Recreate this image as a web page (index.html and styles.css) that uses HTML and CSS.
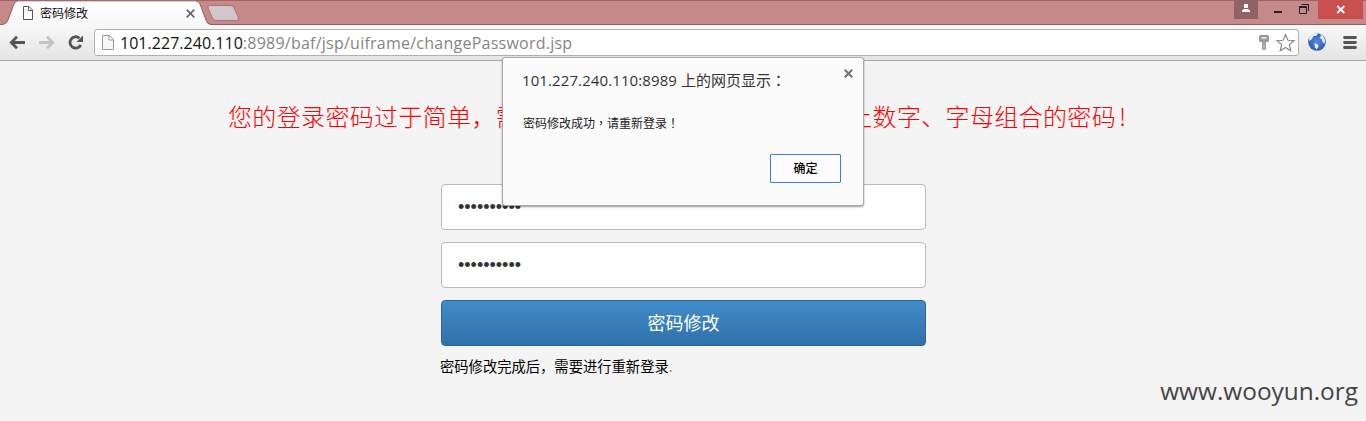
FILE: index.html
```html
<!DOCTYPE html>
<html lang="zh-CN">
<head>
<meta charset="utf-8">
<title>密码修改</title>
<link rel="stylesheet" href="styles.css">
</head>
<body>
<header class="chrome">
  <div class="tabstrip">
    <svg class="tab-shape" width="245" height="26" viewBox="0 0 245 26">
      <defs><linearGradient id="tab" x1="0" y1="0" x2="0" y2="1"><stop offset="0" stop-color="#fff"/><stop offset="1" stop-color="#f7f7f7"/></linearGradient></defs>
      <path d="M0 24.500H2Q6 24.500 7.500 21L14 4Q15.500.8 18 .8H195Q198.500.8 200 4L206 20Q207.500 24.500 211 24.500H245V26H0Z" fill="url(#tab)"/>
      <path d="M0 24.500H2Q6 24.500 7.500 21L14 4Q15.500.8 18 .8H195Q198.500.8 200 4L206 20Q207.500 24.500 211 24.500H245" fill="none" stroke="#955b5d"/>
      <path d="M209.500 5.500H230Q233 5.500 234 8L238.500 18Q239 20.500 236 20.500H216Q213.500 20.500 212.500 18L208 8Q207.500 5.500 209.500 5.500Z" fill="#d3c6cb" stroke="#a77578"/>
    </svg>
    <div class="tab">
      <svg width="10" height="14" viewBox="0 0 10 14" fill="#fff" stroke="#555"><path d="M.5.5H6L9.500 4V13.500H.5ZM5.500.5V4.500H9.500"/></svg>
      <span class="tab-title">密码修改</span>
      <svg width="9" height="9" viewBox="0 0 9 9" stroke="#666" stroke-width="1.700"><path d="M.7.7L8.300 8.300M8.300.7L.7 8.300"/></svg>
    </div>
    <div class="window-buttons">
      <div class="user"><svg width="24" height="19" viewBox="0 0 24 19" fill="#fff"><rect x="10" y="4" width="4" height="4" rx="1"/><path d="M8 12V10.500L10 9H14L16 10.500V12Z"/></svg></div>
      <svg class="win-icons" width="60" height="19" viewBox="0 0 60 19" fill="none" stroke="#222"><path d="M16 12H24" stroke-width="2"/><path d="M41.500 6.500H48.500V13.500H41.500Z" /><path d="M41 7.500H49M43.500 4.500H50.500V11"/></svg>
      <div class="win-close"><svg width="45" height="19" viewBox="0 0 45 19" stroke="#fff" stroke-width="1.800"><path d="M19.300 6L26.300 13M26.300 6L19.300 13"/></svg></div>
    </div>
  </div>
  <div class="toolbar">
    <svg class="nav" width="94" height="36" viewBox="0 0 94 36" fill="none" stroke-width="2.800">
      <path d="M11.500 17.500H25M17 11.800L11.300 17.500L17 23.200" stroke="#555"/>
      <path d="M39 17.500H52.500M47 11.800L52.700 17.500L47 23.200" stroke="#c4c4c4"/>
      <path d="M80.800 20A5.700 5.700 0 1 1 79.500 13.200" stroke="#555"/><path d="M83 10.500V17H76.500Z" fill="#555"/>
    </svg>
    <div class="address">
      <svg class="doc" width="12" height="15" viewBox="0 0 12 15" fill="#f7f7f7" stroke="#999"><path d="M.5.5H7.500L11.500 4.500V14.500H.5ZM7 .5V5H11.500"/></svg>
      <span class="url"><span class="host">101.227.240.110</span>:8989/baf/jsp/uiframe/changePassword.jsp</span>
      <svg class="address-icons" width="40" height="24" viewBox="0 0 40 24">
        <path d="M2 4H10L11 5V10L10 11H8V18L7 19H5L4 18V11H2L1 10V5Z" fill="#999"/><path d="M3.500 7H8.500" stroke="#eee" stroke-width="1.500"/><path d="M6 11V18" stroke="#ccc"/>
        <path d="M27.500 3.500L29.900 9.300L36 9.700L31.300 13.600L32.800 19.700L27.500 16.400L22.200 19.700L23.700 13.600L19 9.700L25.100 9.300Z" fill="#fff" stroke="#888" stroke-width="1.200"/>
      </svg>
    </div>
    <svg class="extras" width="67" height="36" viewBox="0 0 67 36">
      <defs><radialGradient id="globe"><stop offset="0" stop-color="#5a8de0"/><stop offset="1" stop-color="#2f5bb3"/></radialGradient></defs>
      <circle cx="18" cy="17" r="8.800" fill="url(#globe)"/>
      <path d="M10 14Q11 9 17 8L19 9L17 11L14.500 11L13 14L10.500 16ZM21 9L24 11L26 15L25.500 19L23.500 17L23 14.500L20.500 13L22 11ZM15.500 18L19 19.500L19.500 21.500L17.500 24.500L15.800 22Z" fill="#e6effc"/>
      <path d="M45.500 12.500H56.500M45.500 17.500H56.500M45.500 22.500H56.500" stroke="#555" stroke-width="2.800" stroke-linecap="round"/>
    </svg>
  </div>
</header>
<main class="page">
  <h1 class="warning"><span>您的登录密码过于简单，需</span><span>上数字、字母组合的密码<span class="bang">!</span></span></h1>
  <form class="form">
    <div class="field"><span class="dots">••••••••••</span></div>
    <div class="field"><span class="dots">••••••••••</span></div>
    <button class="submit" type="button">密码修改</button>
    <p class="note">密码修改完成后，需要进行重新登录<span class="stop">.</span></p>
  </form>
</main>
<section class="dialog" role="dialog">
  <div class="dialog-head">
    <h2 class="dialog-title"><span class="origin">101.227.240.110:8989</span> 上的网页显示<span class="punct" lang="zh-TW">：</span></h2>
    <svg class="dialog-close" width="9" height="9" viewBox="0 0 9 9" stroke="#777" stroke-width="2.200"><path d="M.8.8L8.200 8.200M8.200.8L.8 8.200"/></svg>
  </div>
  <p class="dialog-text">密码修改成功<span class="punct" lang="zh-TW">，</span>请重新登录<span class="punct" lang="zh-TW">！</span></p>
  <button class="confirm" type="button">确定</button>
</section>
<div class="watermark">www.wooyun.org</div>
</body>
</html>
```

FILE: styles.css
```css
* { box-sizing: border-box; }
body {
  position: relative;
  width: 1366px;
  height: 421px;
  margin: 0;
  overflow: hidden;
  background: #f4f4f4;
  font-family: "Open Sans", "Noto Sans CJK SC", sans-serif;
}
svg { display: block; flex: none; }
.chrome { height: 61px; }
.tabstrip {
  position: relative;
  display: flex;
  justify-content: space-between;
  height: 25px;
  background: #c78a8b;
  border-top: 1px solid #a56567;
  border-bottom: 1px solid #955b5d;
}
.tab-shape { position: absolute; left: 0; top: -1px; z-index: 1; }
.tab {
  position: relative;
  z-index: 2;
  display: flex;
  align-items: center;
  width: 195px;
  height: 24px;
  padding-left: 23px;
}
.tab-title {
  flex: 1;
  margin-left: 7px;
  font-family: "Noto Sans CJK SC", sans-serif;
  font-size: 12px;
  line-height: 18px;
  color: #111;
}
.window-buttons { display: flex; height: 19px; margin: -1px 3px 0 0; }
.user { width: 24px; background: #8f6264; }
.win-icons { width: 60px; }
.win-close { width: 45px; background: #c9504f; }
.toolbar {
  display: flex;
  height: 36px;
  background: linear-gradient(#f8f8f8, #e4e4e4);
  border-bottom: 1px solid #aaa;
}
.address {
  display: flex;
  align-items: center;
  width: 1205px;
  height: 27px;
  margin-top: 4px;
  padding-left: 7px;
  background: #fff;
  border: 1px solid #b0b0b0;
  border-radius: 3px;
}
.url {
  flex: 1;
  margin-left: 6px;
  font-size: 16px;
  line-height: 24px;
  letter-spacing: .24px;
  white-space: nowrap;
  color: #858585;
}
.host { letter-spacing: .03px; color: #111; }
.page { padding-top: 38px; }
.warning {
  display: flex;
  gap: 328px;
  margin: 0 0 0 228px;
  font-family: "Noto Sans CJK SC", sans-serif;
  font-size: 24px;
  font-weight: 300;
  line-height: 34px;
  letter-spacing: .35px;
  white-space: nowrap;
  color: #f00;
}
.bang { margin-left: 3px; }
.form { display: flex; flex-direction: column; width: 485px; margin: 51px 0 0 441px; }
.field {
  display: flex;
  align-items: center;
  height: 46px;
  margin-bottom: 12px;
  padding-left: 16px;
  background: #fff;
  border: 1px solid #bbb;
  border-radius: 4px;
}
.dots { font-family: "Liberation Sans", sans-serif; font-size: 18px; color: #333; }
.submit {
  height: 46px;
  padding: 0 0 2px;
  border: 1px solid #2b669a;
  border-radius: 4px;
  background: linear-gradient(#428bca, #3071a9);
  color: #fff;
  font: 18px/42px "Noto Sans CJK SC", sans-serif;
}
.note { margin: 9px 0 0 -1px; font: 14.3px/22px "Noto Sans CJK SC", sans-serif; color: #000; }
.stop { color: #e08030; }
.dialog {
  position: absolute;
  left: 502px;
  top: 57px;
  width: 362px;
  height: 149px;
  padding: 10px 22px 22px 20px;
  background: #fbfbfb;
  border: 1px solid #aaa;
  border-radius: 3px;
  box-shadow: 0 1px 2px rgba(0, 0, 0, .4);
}
.dialog-head { display: flex; justify-content: space-between; }
.dialog-title {
  margin: 0 0 0 -1px;
  font-size: 15px;
  font-weight: 400;
  line-height: 24px;
  white-space: nowrap;
  color: #333;
}
.origin { letter-spacing: .1px; }
.punct { font-family: "Noto Sans CJK TC", sans-serif; }
.dialog-close { margin: 1px -12px 0 0; }
.dialog-text { margin: 21px 0 0; font: 12px/20px "Noto Sans CJK SC", sans-serif; color: #222; }
.confirm {
  display: block;
  width: 71px;
  height: 29px;
  margin: 21px 0 0 auto;
  padding: 0 0 2px;
  border: 1px solid #4078e8;
  border-radius: 1px;
  background: #fcfcfc;
  color: #000;
  font: 500 12px/25px "Noto Sans CJK SC", sans-serif;
}
.watermark {
  position: absolute;
  right: 8px;
  bottom: 13px;
  font-family: "Open Sans", sans-serif;
  font-size: 24.4px;
  line-height: 34px;
  color: #444;
}
```
